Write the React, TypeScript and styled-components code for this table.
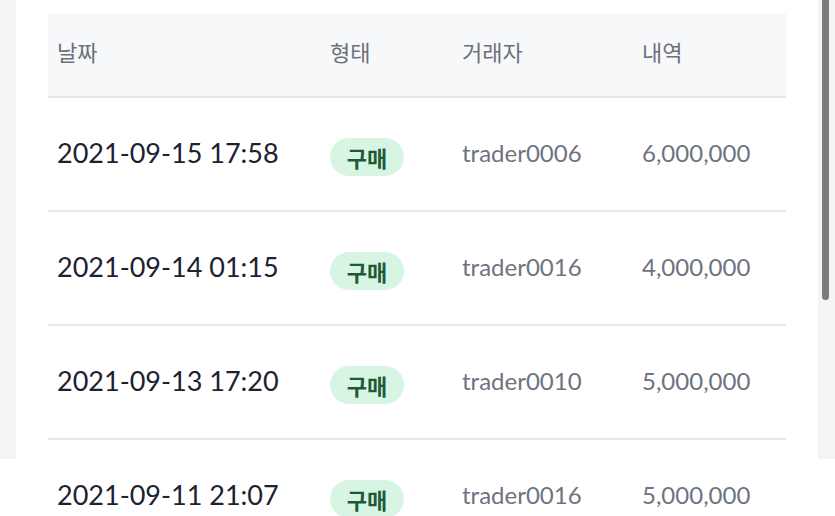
import React from 'react';
import styled, { createGlobalStyle } from 'styled-components';

const GlobalStyle = createGlobalStyle`
  html, body {
    margin: 0;
    padding: 0;
    overflow: hidden;
  }
  body {
    font-family: Lato, "Noto Sans CJK KR", "Noto Sans", sans-serif;
  }
`;

interface Trade {
  date: string;
  kind: string;
  trader: string;
  amount: number;
}

const trades: Trade[] = [
  { date: '2021-09-15 17:58', kind: '구매', trader: 'trader0006', amount: 6000000 },
  { date: '2021-09-14 01:15', kind: '구매', trader: 'trader0016', amount: 4000000 },
  { date: '2021-09-13 17:20', kind: '구매', trader: 'trader0010', amount: 5000000 },
  { date: '2021-09-11 21:07', kind: '구매', trader: 'trader0016', amount: 5000000 },
];

const Page = styled.div`
  position: relative;
  height: 516px;
  overflow: hidden;
  background: linear-gradient(#f3f4f6 0 459px, #ffffff 459px);
`;

const ScrollThumb = styled.div`
  position: absolute;
  top: 0;
  right: 6px;
  width: 7px;
  height: 300px;
  border-radius: 0 0 4px 4px;
  background: #7b7b7d;
`;

const Card = styled.section`
  width: 802px;
  margin-left: 16px;
  padding: 13px 32px 40px;
  box-sizing: border-box;
  background: #ffffff;
`;

const Table = styled.div`
  display: grid;
  grid-template-columns: 273px 132px 180px 1fr;
`;

const HeadRow = styled.div`
  display: contents;
`;

const HeadCell = styled.div`
  height: 85px;
  display: flex;
  align-items: center;
  padding: 0 9px 8px;
  box-sizing: border-box;
  background: #f7f8fa;
  border-bottom: 2px solid #e3e4e9;
  color: #6c707b;
  font-size: 22px;
  font-family: "Noto Sans CJK KR", sans-serif;
`;

const Row = styled.div`
  display: contents;
`;

const Cell = styled.div<{ $tone?: 'dark' | 'muted' }>`
  height: 114px;
  box-sizing: border-box;
  display: flex;
  align-items: center;
  padding: 0 9px 3px;
  border-bottom: 2px solid #e6e7ec;
  font-size: ${({ $tone }) => ($tone === 'dark' ? '27px' : '24px')};
  color: ${({ $tone }) => ($tone === 'dark' ? '#1d2130' : '#6e7380')};
`;

const Badge = styled.span`
  display: inline-flex;
  align-items: center;
  justify-content: center;
  width: 74px;
  height: 38px;
  margin-top: 8px;
  border-radius: 19px;
  background: #d8f5e3;
  color: #1e5a38;
  font-family: "Noto Sans CJK KR", sans-serif;
  font-weight: 700;
  font-size: 22px;
`;

const formatAmount = (n: number) => n.toLocaleString('en-US');

export default function App() {
  return (
    <>
      <GlobalStyle />
      <Page>
        <Card>
          <Table>
            <HeadRow>
              <HeadCell>날짜</HeadCell>
              <HeadCell>형태</HeadCell>
              <HeadCell>거래자</HeadCell>
              <HeadCell>내역</HeadCell>
            </HeadRow>
            {trades.map((t) => (
              <Row key={t.date}>
                <Cell $tone="dark">{t.date}</Cell>
                <Cell>
                  <Badge>{t.kind}</Badge>
                </Cell>
                <Cell $tone="muted">{t.trader}</Cell>
                <Cell $tone="muted">{formatAmount(t.amount)}</Cell>
              </Row>
            ))}
          </Table>
        </Card>
        <ScrollThumb />
      </Page>
    </>
  );
}
